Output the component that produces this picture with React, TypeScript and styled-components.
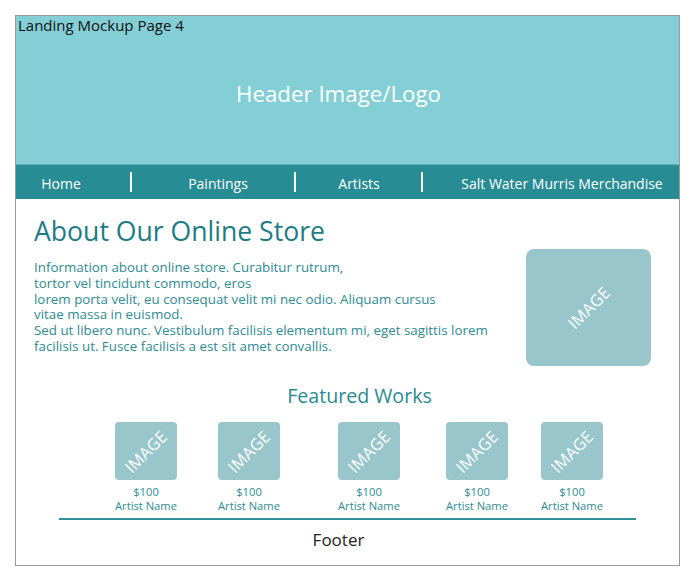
import React from 'react';
import styled, { createGlobalStyle } from 'styled-components';

const GlobalStyle = createGlobalStyle`
  body {
    margin: 0;
    background: #ffffff;
    font-family: 'Open Sans', 'DejaVu Sans', sans-serif;
  }
`;

const navItems = [
  { label: 'Home', ml: 0, w: 90 },
  { label: 'Paintings', ml: 16, w: 140 },
  { label: 'Artists', ml: 4, w: 118 },
  { label: 'Salt Water Murris Merchandise', ml: 24, w: 230 },
];
const sepMargins = [24, 6, 3];

// left gap before each thumbnail, as in the mockup
const works = [56, 41, 58, 46, 33];

function App() {
  return (
    <>
      <GlobalStyle />
      <Frame>
        <Header>
          <PageLabel>Landing Mockup Page 4</PageLabel>
          <Logo>Header Image/Logo</Logo>
        </Header>
        <Nav>
          {navItems.map((item, i) => (
            <React.Fragment key={item.label}>
              <NavLink $ml={item.ml} $w={item.w}>
                {item.label}
              </NavLink>
              {i < sepMargins.length && <NavSep $ml={sepMargins[i]} />}
            </React.Fragment>
          ))}
        </Nav>
        <Main>
          <About>
            <AboutText>
              <Heading>About Our Online Store</Heading>
              <Para>
                Information about online store. Curabitur rutrum,
                <br />
                tortor vel tincidunt commodo, eros
                <br />
                lorem porta velit, eu consequat velit mi nec odio. Aliquam cursus
                <br />
                vitae massa in euismod.
                <br />
                Sed ut libero nunc. Vestibulum facilisis elementum mi, eget sagittis lorem
                <br />
                facilisis ut. Fusce facilisis a est sit amet convallis.
              </Para>
            </AboutText>
            <BigImage>
              <ImageLabel>IMAGE</ImageLabel>
            </BigImage>
          </About>
          <SubHeading>Featured Works</SubHeading>
          <WorksRow>
            {works.map((ml, i) => (
              <Work key={i} $ml={ml}>
                <Thumb>
                  <ImageLabel>IMAGE</ImageLabel>
                </Thumb>
                <Caption>
                  $100
                  <br />
                  Artist Name
                </Caption>
              </Work>
            ))}
          </WorksRow>
        </Main>
        <Footer>Footer</Footer>
      </Frame>
    </>
  );
}

export default App;

const Frame = styled.div`
  margin: 15px 0 0 15px;
  width: 665px;
  height: 551px;
  box-sizing: border-box;
  border: 1px solid #9a9a9a;
  display: flex;
  flex-direction: column;
`;

const Header = styled.header`
  position: relative;
  height: 149px;
  background: #84cfd6;
  display: flex;
  align-items: center;
  justify-content: center;
  padding: 6px 18px 0 0;
  box-sizing: border-box;
  border-bottom: 1px solid #5fb1b8;
`;

const PageLabel = styled.div`
  position: absolute;
  top: -1px;
  left: 2px;
  font-size: 15px;
  color: #111;
`;

const Logo = styled.div`
  font-size: 22.3px;
  color: #ffffff;
`;

const Nav = styled.nav`
  height: 34px;
  background: #288c94;
  display: flex;
  align-items: center;
`;

const NavLink = styled.div<{ $ml: number; $w: number }>`
  margin-left: ${(p) => p.$ml}px;
  width: ${(p) => p.$w}px;
  flex: none;
  text-align: center;
  font-size: 14px;
  color: #ffffff;
  padding-top: 2px;
`;

const NavSep = styled.div<{ $ml: number }>`
  margin-left: ${(p) => p.$ml}px;
  width: 2px;
  height: 20px;
  background: #ffffff;
  flex: none;
`;

const Main = styled.main`
  padding: 13px 27px 0 18px;
  display: flex;
  flex-direction: column;
`;

const About = styled.section`
  display: flex;
  justify-content: space-between;
  align-items: flex-start;
`;

const AboutText = styled.div`
  display: flex;
  flex-direction: column;
`;

const Heading = styled.h1`
  margin: 0 0 10px;
  font-size: 26.6px;
  font-weight: 400;
  color: #1e7c85;
  line-height: 38px;
`;

const Para = styled.p`
  margin: 0;
  font-size: 13.35px;
  line-height: 15.8px;
  color: #2e8b92;
`;

const BigImage = styled.div`
  margin: 37px 1px 0 0;
  width: 125px;
  height: 117px;
  border-radius: 8px;
  background: #98c6cb;
  display: flex;
  align-items: center;
  justify-content: center;
  overflow: hidden;
  flex: none;
`;

const ImageLabel = styled.span`
  transform: rotate(-45deg);
  font-size: 16.5px;
  color: #ffffff;
`;

const SubHeading = styled.h2`
  margin: 16px 0 0;
  padding-left: 33px;
  text-align: center;
  font-size: 19.6px;
  font-weight: 400;
  color: #2a8a91;
  line-height: 28px;
`;

const WorksRow = styled.div`
  display: flex;
  margin: 12px 16px 0 25px;
  padding-bottom: 5px;
  border-bottom: 2px solid #2d9199;
`;

const Work = styled.div<{ $ml: number }>`
  margin-left: ${(p) => p.$ml}px;
  width: 62px;
  flex: none;
  display: flex;
  flex-direction: column;
  align-items: center;
`;

const Thumb = styled.div`
  width: 62px;
  height: 58px;
  border-radius: 4px;
  background: #98c6cb;
  display: flex;
  align-items: center;
  justify-content: center;
  overflow: hidden;
`;

const Caption = styled.div`
  margin-top: 5px;
  font-size: 11.2px;
  line-height: 14px;
  color: #2e8b92;
  text-align: center;
  white-space: nowrap;
`;

const Footer = styled.footer`
  padding: 8px 18px 0 0;
  text-align: center;
  font-size: 17px;
  color: #222;
`;
